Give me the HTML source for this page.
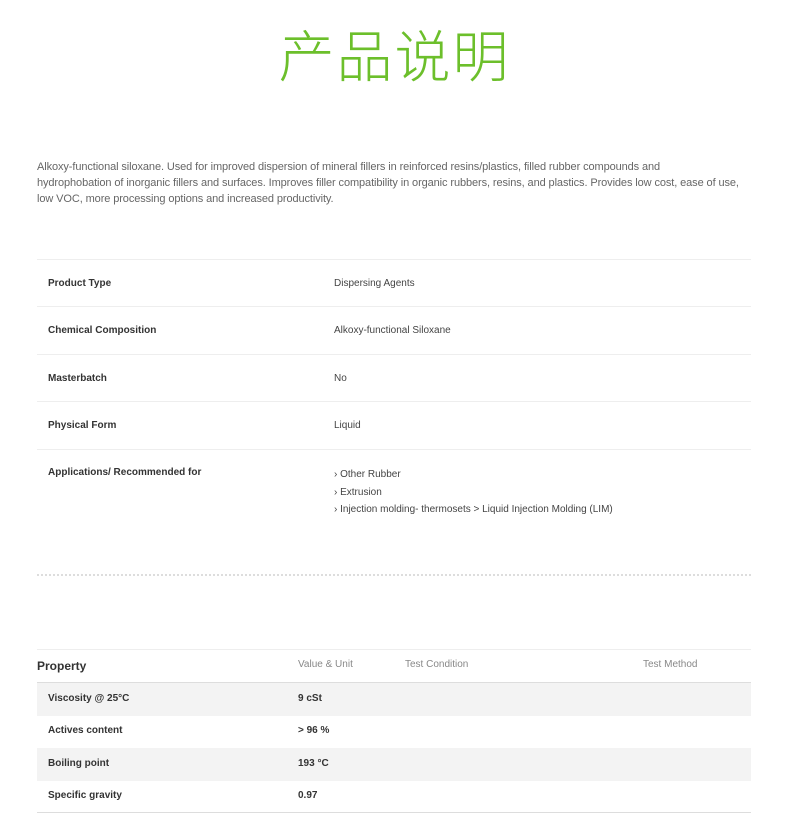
<!DOCTYPE html>
<html><head><meta charset="utf-8"><style>
body{margin:0;background:#fff;width:789px;height:833px;position:relative;font-family:"Liberation Sans",sans-serif;color:#333;overflow:hidden}
.a{position:absolute}
h1{position:absolute;left:0;width:789px;top:13px;margin:0;text-align:center;font:300 56px "Noto Sans CJK SC",sans-serif;color:#6cbf2b;letter-spacing:2px}
.desc{left:37px;top:159px;width:760px;font-size:11px;letter-spacing:-0.1px;line-height:16px;color:#666;white-space:nowrap}
.ln{position:absolute;left:37px;width:714px;border-top:1px solid #eee}
.lb{position:absolute;left:48px;font-size:10px;font-weight:bold;color:#333}
.v{position:absolute;left:334px;font-size:10px;color:#444}
.sh{position:absolute;left:37px;width:714px;height:33px;background:#f3f3f3}
.h{position:absolute;font-size:10px;color:#888}
.v2{position:absolute;left:298px;font-size:10px;font-weight:bold;color:#333}
</style></head><body>
<h1>产品说明</h1>
<div class="a desc">Alkoxy-functional siloxane. Used for improved dispersion of mineral fillers in reinforced resins/plastics, filled rubber compounds and<br>hydrophobation of inorganic fillers and surfaces. Improves filler compatibility in organic rubbers, resins, and plastics. Provides low cost, ease of use,<br>low VOC, more processing options and increased productivity.</div>
<div class="ln" style="top:259px"></div>
<div class="lb" style="top:278px">Product Type</div><div class="v" style="top:278px">Dispersing Agents</div>
<div class="ln" style="top:306px"></div>
<div class="lb" style="top:325px">Chemical Composition</div><div class="v" style="top:325px">Alkoxy-functional Siloxane</div>
<div class="ln" style="top:354px"></div>
<div class="lb" style="top:373px">Masterbatch</div><div class="v" style="top:373px">No</div>
<div class="ln" style="top:401px"></div>
<div class="lb" style="top:420px">Physical Form</div><div class="v" style="top:420px">Liquid</div>
<div class="ln" style="top:449px"></div>
<div class="lb" style="top:467px">Applications/ Recommended for</div>
<div class="v" style="top:466px;line-height:17.5px">› Other Rubber<br>› Extrusion<br>› Injection molding- thermosets &gt; Liquid Injection Molding (LIM)</div>
<div class="ln" style="top:574px;border-top:2px dotted #ddd"></div>
<div class="ln" style="top:649px"></div>
<div class="a" style="left:37px;top:659px;font-size:12px;font-weight:bold;color:#333">Property</div>
<div class="h" style="left:298px;top:659px">Value &amp; Unit</div>
<div class="h" style="left:405px;top:659px">Test Condition</div>
<div class="h" style="left:643px;top:659px">Test Method</div>
<div class="ln" style="top:682px;border-top:1px solid #ddd"></div>
<div class="sh" style="top:683px"></div>
<div class="sh" style="top:748px"></div>
<div class="lb" style="top:693px">Viscosity @ 25°C</div><div class="v2" style="top:693px">9 cSt</div>
<div class="lb" style="top:725px">Actives content</div><div class="v2" style="top:725px">&gt; 96 %</div>
<div class="lb" style="top:758px">Boiling point</div><div class="v2" style="top:758px">193 °C</div>
<div class="lb" style="top:790px">Specific gravity</div><div class="v2" style="top:790px">0.97</div>
<div class="ln" style="top:812px;border-top:1px solid #ddd"></div>
</body></html>
